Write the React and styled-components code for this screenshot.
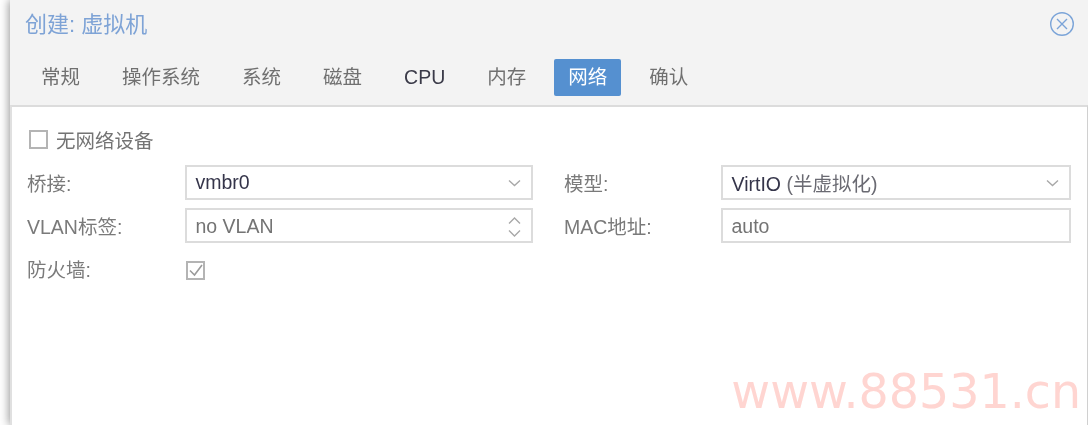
import React from "react";
import styled, { createGlobalStyle } from "styled-components";

const Global = createGlobalStyle`
  html, body { margin: 0; padding: 0; background: #fff; }
  body { width: 1088px; height: 425px; overflow: hidden; font-family: "Liberation Sans", "Noto Sans CJK SC", sans-serif; }
`;

const Page = styled.div`
  position: relative;
  width: 1088px;
  height: 425px;
  padding-left: 10px;
  box-sizing: border-box;
  overflow: hidden;
  background: #fff;
  filter: blur(0.5px);
`;

const Win = styled.div`
  height: 425px;
  background: #f3f3f3;
  box-shadow: -1px 0 9px rgba(0, 0, 0, 0.42);
  display: flex;
  flex-direction: column;
`;

const Header = styled.div`
  height: 50px;
  flex: none;
  box-sizing: border-box;
  display: flex;
  align-items: center;
  justify-content: space-between;
  padding: 0 13px 3px 15px;
`;

const Title = styled.div`
  font-size: 22px;
  color: #7ea3d6;
  margin-bottom: 3px;
`;

const CloseIcon = styled.svg`
  width: 26px;
  height: 26px;
  display: block;
`;

const Tabs = styled.div`
  height: 55px;
  flex: none;
  box-sizing: border-box;
  display: flex;
  align-items: flex-start;
  gap: 14px;
  padding: 9px 0 0 17px;
`;

const Tab = styled.div`
  height: 37px;
  line-height: 37px;
  padding: 0 14px;
  font-size: 19.5px;
  border-radius: 2px;
  white-space: nowrap;
  color: ${(p) => (p.$active ? "#fff" : p.$dark ? "#3a3a48" : "#707070")};
  background: ${(p) => (p.$active ? "#5590d0" : "transparent")};
`;

const Panel = styled.div`
  flex: 1;
  background: #fff;
  border-top: 2px solid #dcdcdc;
  border-left: 2px solid #e0e0e0;
  border-right: 1px solid #d0d0d0;
  padding: 22px 16px 0 15px;
  display: flex;
  flex-direction: column;
`;

const Check = styled.span`
  width: 19px;
  height: 19px;
  flex: none;
  box-sizing: border-box;
  border: 2px solid #b4b4b4;
  display: inline-flex;
  align-items: center;
  justify-content: center;
`;

const FirewallCheck = styled(Check)`
  margin-top: 4px;
`;

const NoDevice = styled.label`
  display: flex;
  align-items: center;
  gap: 8px;
  height: 20px;
  padding-left: 2px;
  margin-bottom: 16px;
  font-size: 19.5px;
  color: #747474;
`;

const Columns = styled.div`
  display: grid;
  grid-template-columns: 506px 507px;
  column-gap: 31px;
  row-gap: 8px;
`;

const Row = styled.div`
  display: flex;
  align-items: center;
  height: 35px;
`;

const Label = styled.div`
  flex: none;
  width: ${(p) => p.$w}px;
  font-size: 19.5px;
  color: #7a7a7a;
  white-space: nowrap;
`;

const Field = styled.div`
  flex: 1;
  height: 35px;
  box-sizing: border-box;
  border: 2px solid #dcdcdc;
  display: flex;
  align-items: center;
  justify-content: space-between;
  padding: ${(p) => (p.$muted ? "2px 10px 0 8.5px" : "0 10px 0 8.5px")};
  font-size: 19.5px;
  color: ${(p) => (p.$muted ? "#747474" : "#35354a")};
`;

const Hint = styled.span`
  color: #6a6a72;
`;

const Arrow = styled.svg`
  display: block;
  flex: none;
`;

const Watermark = styled.div`
  position: absolute;
  right: 7px;
  bottom: 3px;
  font-family: "DejaVu Sans", sans-serif;
  font-size: 47.5px;
  line-height: 60px;
  color: #ffd5d1;
`;

const Chevron = () => (
  <Arrow width="13" height="8" viewBox="0 0 13 8" fill="none" stroke="#a8a8a8" strokeWidth="1.4">
    <path d="M1 1.5 6.5 6.5 12 1.5" />
  </Arrow>
);

const Spinner = () => (
  <Arrow width="13" height="24" viewBox="0 0 13 24" fill="none" stroke="#a8a8a8" strokeWidth="1.4">
    <path d="M1 8.5 6.5 3 12 8.5M1 15.5 6.5 21 12 15.5" />
  </Arrow>
);

const tabs = ["常规", "操作系统", "系统", "磁盘", "CPU", "内存", "网络", "确认"];

export default function App() {
  return (
    <>
      <Global />
      <Page>
        <Win>
          <Header>
            <Title>创建: 虚拟机</Title>
            <CloseIcon viewBox="0 0 26 26" fill="none" stroke="#7ba4d8" strokeWidth="1.4">
              <circle cx="13" cy="13" r="11.3" />
              <path d="M8 8 18 18M18 8 8 18" />
            </CloseIcon>
          </Header>
          <Tabs>
            {tabs.map((t) => (
              <Tab key={t} $active={t === "网络"} $dark={t === "CPU"}>{t}</Tab>
            ))}
          </Tabs>
          <Panel>
            <NoDevice>
              <Check />
              无网络设备
            </NoDevice>
            <Columns>
              <Row>
                <Label $w={158}>桥接:</Label>
                <Field>vmbr0<Chevron /></Field>
              </Row>
              <Row>
                <Label $w={157}>模型:</Label>
                <Field><span>VirtIO <Hint>(半虚拟化)</Hint></span><Chevron /></Field>
              </Row>
              <Row>
                <Label $w={158}>VLAN标签:</Label>
                <Field $muted>no VLAN<Spinner /></Field>
              </Row>
              <Row>
                <Label $w={157}>MAC地址:</Label>
                <Field $muted>auto</Field>
              </Row>
              <Row>
                <Label $w={159}>防火墙:</Label>
                <FirewallCheck>
                  <svg width="15" height="15" viewBox="0 0 15 15" fill="none" stroke="#9a9a9a" strokeWidth="1.6">
                    <path d="M2 7.5 6.5 12 14 2" />
                  </svg>
                </FirewallCheck>
              </Row>
            </Columns>
          </Panel>
        </Win>
        <Watermark>www.88531.cn</Watermark>
      </Page>
    </>
  );
}
